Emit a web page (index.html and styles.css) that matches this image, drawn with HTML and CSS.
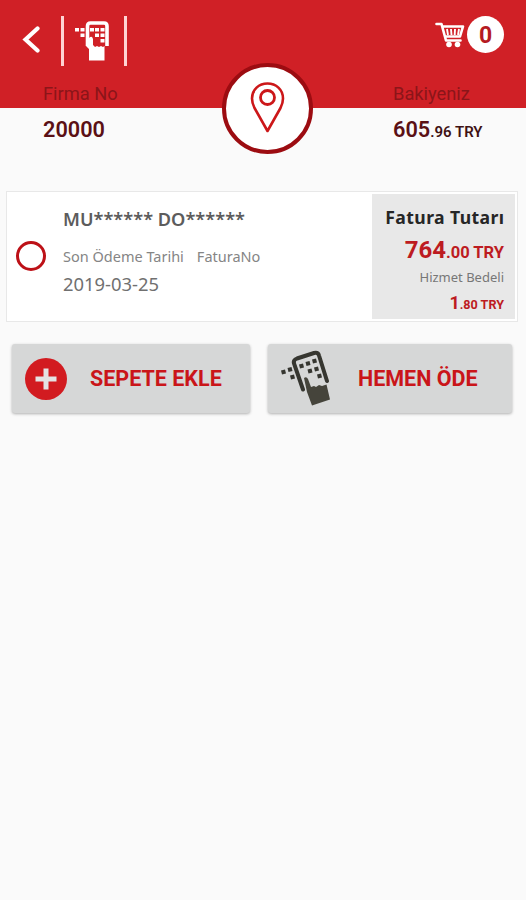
FILE: index.html
```
<!DOCTYPE html>
<html lang="tr">
<head>
    <meta charset="UTF-8">
    <meta name="viewport" content="width=device-width, initial-scale=1.0">
    <title>Fatura</title>
    <link rel="stylesheet" href="styles.css">
</head>
<body>
    <header class="header">
        <div class="toolbar">
            <svg class="back" width="18" height="28" viewBox="0 0 18 28">
                <path d="M15.500 2.500L3.500 13.500L15.500 24.500" fill="none" stroke="#fff" stroke-width="4.200" stroke-linecap="round"/>
            </svg>
            <div class="logo">
                <svg width="36" height="42" viewBox="0 0 36 42">
                    <path d="M12.500 26V6Q12.500 3 15.500 3H29Q32 3 32 6V26" fill="none" stroke="#fff" stroke-width="3.600"/>
                    <path d="M14 18Q17 15 18 19V25L20 27L22 26L24 27L26 26L28 27L29.500 26V40.500H14V29L11 26V18Z" fill="#fff"/>
                    <path d="M0 8h4v3.500h-4zM5.500 8h4v3.500h-4zM15 8h4v3.500h-4zM20 8h4v3.500h-4zM25.500 8h4v3.500h-4zM5.500 13.500h4v3.500h-4zM20 13.500h4v3.500h-4zM25.500 13.500h4v3.500h-4zM25.500 19h4v3.500h-4z" fill="#fff"/>
                </svg>
            </div>
            <div class="cart">
                <svg width="30" height="27" viewBox="0 0 30 27">
                    <path d="M1.500 3H6.500L11 19.500H25.500M7.500 5.500H28L25 15.500H10" fill="none" stroke="#fff" stroke-width="2.600" stroke-linejoin="round" stroke-linecap="round"/>
                    <path d="M12 8L13 14M16 8L16.500 14M20 8L19.700 14M24 8L23 14" stroke="#fff" stroke-width="1.900"/>
                    <circle cx="14" cy="23.500" r="2.800" fill="#fff"/>
                    <circle cx="22.500" cy="23.500" r="2.800" fill="#fff"/>
                </svg>
                <span class="count">0</span>
            </div>
        </div>
        <div class="row labels">
            <span class="left firm-label">Firma No</span>
            <span class="right balance-label">Bakiyeniz</span>
        </div>
        <div class="pin">
            <svg width="36" height="54" viewBox="0 0 36 54">
                <path d="M17.500 50L4.500 27Q2 22 2 17.500C2 8.500 9 2.500 17.500 2.500S33 8.500 33 17.500Q33 22 30.500 27Z" fill="none" stroke="#cc1719" stroke-width="2.600" stroke-linejoin="round"/>
                <circle cx="17.500" cy="16.500" r="7" fill="none" stroke="#cc1719" stroke-width="2.800"/>
            </svg>
        </div>
    </header>
    <div class="row values">
        <span class="left firm">20000</span>
        <span class="right balance">605<small>.96 TRY</small></span>
    </div>

    <div class="card">
        <span class="radio"></span>
        <div class="info">
            <div class="name">MU****** DO******</div>
            <div class="captions"><span class="due">Son Ödeme Tarihi</span><span class="no">FaturaNo</span></div>
            <div class="date">2019-03-25</div>
        </div>
        <div class="total">
            <div class="total-title">Fatura Tutarı</div>
            <div class="amount">764<small>.00 TRY</small></div>
            <div class="fee-title">Hizmet Bedeli</div>
            <div class="fee">1<small>.80 TRY</small></div>
        </div>
    </div>

    <div class="buttons">
        <button class="add">
            <svg width="42" height="42" viewBox="0 0 42 42">
                <circle cx="21" cy="21" r="21" fill="#d21b20"/>
                <path d="M21 10.500V31.500M10.500 21H31.500" stroke="#e4e3e3" stroke-width="5"/>
            </svg>
            <span class="add-text">SEPETE EKLE</span>
        </button>
        <button class="pay">
            <svg width="50" height="58" viewBox="0 0 50 58">
                <path d="M22 39.500L13 13.500Q12 10 16 8.500L33 3Q37 2 38 5.500L46 31" fill="none" stroke="#363630" stroke-width="4" stroke-linecap="round"/>
                <path d="M23 28Q25.500 26 27 29L30 37L33 36L35 37L38 35L41 36L45.500 34.500L49 49.500L31 55.500L26 42Z" fill="#45443b"/>
                <path d="M0 20.500l4-1 1 4-4 1zM6.500 18l4-1 1 4-4 1zM9 25.500l4-1 1 4-4 1zM18 14.500l4-1 1 4-4 1zM24.500 12l4-1 1 4-4 1zM31 9.500l4-1 1 4-4 1zM26.500 19.500l4-1 1 4-4 1zM33 17.500l4-1 1 4-4 1zM36 24.500l4-1 1 4-4 1z" fill="#363630"/>
            </svg>
            <span class="pay-text">HEMEN ÖDE</span>
        </button>
    </div>
</body>
</html>
```
FILE: styles.css
```
* {
    box-sizing: border-box;
}
body {
    margin: 0;
    min-height: 900px;
    background: #fafafa;
    font-family: Roboto, sans-serif;
    white-space: nowrap;
}
.header {
    position: relative;
    height: 108px;
    background: #d02026;
}
.toolbar {
    display: flex;
    align-items: center;
    height: 82px;
    padding: 0 22px;
}
.back {
    margin-top: -2px;
}
.logo {
    display: flex;
    align-items: center;
    justify-content: center;
    width: 66px;
    height: 50px;
    margin-left: 21px;
    border-left: 3px solid #ffd3d3;
    border-right: 3px solid #ffd3d3;
}
.logo svg {
    margin-left: -3px;
}
.cart {
    display: flex;
    align-items: center;
    margin-left: auto;
    margin-top: -14px;
}
.count {
    width: 37px;
    height: 37px;
    margin-left: 2px;
    border-radius: 50%;
    background: #fff;
    color: #b51b22;
    font-size: 23px;
    font-weight: 700;
    line-height: 39px;
    text-align: center;
}
.row {
    display: flex;
    justify-content: space-between;
    padding-left: 43px;
}
.right {
    width: 133px;
}
.labels {
    color: #8b1519;
    font-size: 18.3px;
    line-height: 24px;
}
.values {
    height: 83px;
    color: #5b1015;
    font-size: 21.7px;
    font-weight: 600;
    line-height: 44px;
}
.values small {
    color: #3f1214;
    font-size: 15px;
}
.pin {
    position: absolute;
    top: 63px;
    left: 222px;
    display: flex;
    align-items: center;
    justify-content: center;
    width: 91px;
    height: 91px;
    border: 4px solid #9c0c11;
    border-radius: 50%;
    background: #fff;
}
.pin svg {
    margin-top: -2px;
}
.card {
    display: flex;
    width: 512px;
    height: 131px;
    margin-left: 6px;
    padding: 2px;
    border: 1px solid #e8e8e8;
    background: #fff;
    font-family: "Noto Sans", sans-serif;
}
.radio {
    width: 30px;
    height: 30px;
    margin: 47px 0 0 7px;
    border: 3px solid #bd1117;
    border-radius: 50%;
}
.info {
    flex: 1;
    padding: 11px 0 0 17px;
    color: #707070;
}
.name {
    color: #5c5c5c;
    font-size: 18.2px;
    font-weight: 600;
    line-height: 28px;
}
.captions {
    margin-top: 10px;
    color: #858585;
    font-size: 14.5px;
    line-height: 27px;
}
.no {
    margin-left: 13px;
}
.date {
    font-size: 18.4px;
    line-height: 27px;
}
.total {
    width: 143px;
    padding: 9px 11px 0 0;
    background: #e8e8e8;
    text-align: right;
    color: #bd1b21;
}
.total-title {
    color: #262626;
    font-size: 17.6px;
    font-weight: 700;
    letter-spacing: 0.4px;
    line-height: 29px;
    margin-right: -0.4px;
}
.amount {
    font-family: Roboto, sans-serif;
    font-size: 24px;
    font-weight: 700;
    line-height: 37px;
}
.amount small {
    font-size: 16.5px;
}
.fee-title {
    margin-top: -2px;
    color: #777;
    font-size: 13px;
    line-height: 16px;
}
.fee {
    font-family: Roboto, sans-serif;
    font-size: 18px;
    font-weight: 700;
    line-height: 36px;
}
.fee small {
    font-size: 12.6px;
}
.buttons {
    display: flex;
    gap: 18px;
    margin: 22px 14px 0 12px;
}
.buttons button {
    display: flex;
    align-items: center;
    height: 69px;
    padding: 0 0 0 13px;
    border: none;
    border-radius: 3px;
    background: #d6d7d7;
    box-shadow: 0 1px 3px rgba(0, 0, 0, 0.3);
    color: #ca1519;
    font-family: Roboto, sans-serif;
    font-size: 21.5px;
    font-weight: 700;
}
.buttons .add {
    width: 238px;
}
.buttons .pay {
    width: 244px;
}
.add-text {
    margin-left: 23px;
}
.pay-text {
    margin-left: 27px;
}
```
